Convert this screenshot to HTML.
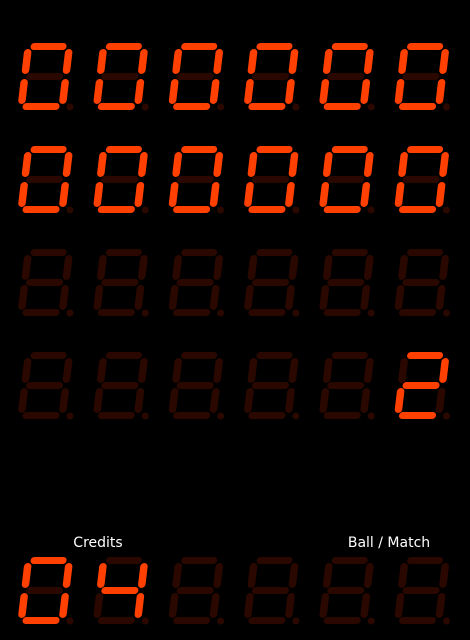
<!DOCTYPE html>
<html><head><meta charset="utf-8"><style>
html,body{margin:0;padding:0;background:#000;width:470px;height:640px;overflow:hidden}
svg{display:block}
text{font-family:"DejaVu Sans","Liberation Sans",sans-serif;font-size:14px;fill:#fff}
</style></head><body>
<svg width="470" height="640" viewBox="0 0 470 640" xmlns="http://www.w3.org/2000/svg">
<defs>
<g id="sa"><rect x="6" y="0" width="36" height="7" rx="3.5"/></g>
<g id="sf"><rect x="0" y="6" width="7.5" height="25" rx="3.7"/></g>
<g id="sb"><rect x="41" y="6" width="7.5" height="25" rx="3.7"/></g>
<g id="sg"><rect x="5" y="30" width="37" height="7" rx="3.5"/></g>
<g id="se"><rect x="0" y="36" width="7.5" height="25" rx="3.7"/></g>
<g id="sc"><rect x="41" y="36" width="7.5" height="25" rx="3.7"/></g>
<g id="sd"><rect x="5" y="60" width="37" height="7" rx="3.5"/></g>
<g id="d0"><g transform="skewX(-6.7)">
<use href="#sa" fill="#ff4000"/><use href="#sf" fill="#ff4000"/><use href="#sb" fill="#ff4000"/><use href="#sg" fill="#2a0800"/><use href="#se" fill="#ff4000"/><use href="#sc" fill="#ff4000"/><use href="#sd" fill="#ff4000"/></g>
<circle cx="45" cy="64" r="3.5" fill="#2a0800"/></g>
<g id="doff"><g transform="skewX(-6.7)" fill="#2a0800">
<use href="#sa"/><use href="#sf"/><use href="#sb"/><use href="#sg"/><use href="#se"/><use href="#sc"/><use href="#sd"/></g>
<circle cx="45" cy="64" r="3.5" fill="#2a0800"/></g>
<g id="d2"><g transform="skewX(-6.7)">
<use href="#sa" fill="#ff4000"/><use href="#sf" fill="#2a0800"/><use href="#sb" fill="#ff4000"/><use href="#sg" fill="#ff4000"/><use href="#se" fill="#ff4000"/><use href="#sc" fill="#2a0800"/><use href="#sd" fill="#ff4000"/></g>
<circle cx="45" cy="64" r="3.5" fill="#2a0800"/></g>
<g id="d4"><g transform="skewX(-6.7)">
<use href="#sa" fill="#2a0800"/><use href="#sf" fill="#ff4000"/><use href="#sb" fill="#ff4000"/><use href="#sg" fill="#ff4000"/><use href="#se" fill="#2a0800"/><use href="#sc" fill="#ff4000"/><use href="#sd" fill="#2a0800"/></g>
<circle cx="45" cy="64" r="3.5" fill="#2a0800"/></g>
</defs>
<use href="#d0" x="25" y="43"/><use href="#d0" x="100.3" y="43"/><use href="#d0" x="175.6" y="43"/><use href="#d0" x="250.9" y="43"/><use href="#d0" x="326.2" y="43"/><use href="#d0" x="401.5" y="43"/>
<use href="#d0" x="25" y="146"/><use href="#d0" x="100.3" y="146"/><use href="#d0" x="175.6" y="146"/><use href="#d0" x="250.9" y="146"/><use href="#d0" x="326.2" y="146"/><use href="#d0" x="401.5" y="146"/>
<use href="#doff" x="25" y="249"/><use href="#doff" x="100.3" y="249"/><use href="#doff" x="175.6" y="249"/><use href="#doff" x="250.9" y="249"/><use href="#doff" x="326.2" y="249"/><use href="#doff" x="401.5" y="249"/>
<use href="#doff" x="25" y="352"/><use href="#doff" x="100.3" y="352"/><use href="#doff" x="175.6" y="352"/><use href="#doff" x="250.9" y="352"/><use href="#doff" x="326.2" y="352"/><use href="#d2" x="401.5" y="352"/>
<text x="98" y="547" text-anchor="middle">Credits</text>
<text x="389" y="547" text-anchor="middle">Ball / Match</text>
<use href="#d0" x="25" y="557"/><use href="#d4" x="100.3" y="557"/><use href="#doff" x="175.6" y="557"/><use href="#doff" x="250.9" y="557"/><use href="#doff" x="326.2" y="557"/><use href="#doff" x="401.5" y="557"/>
</svg>
</body></html>
